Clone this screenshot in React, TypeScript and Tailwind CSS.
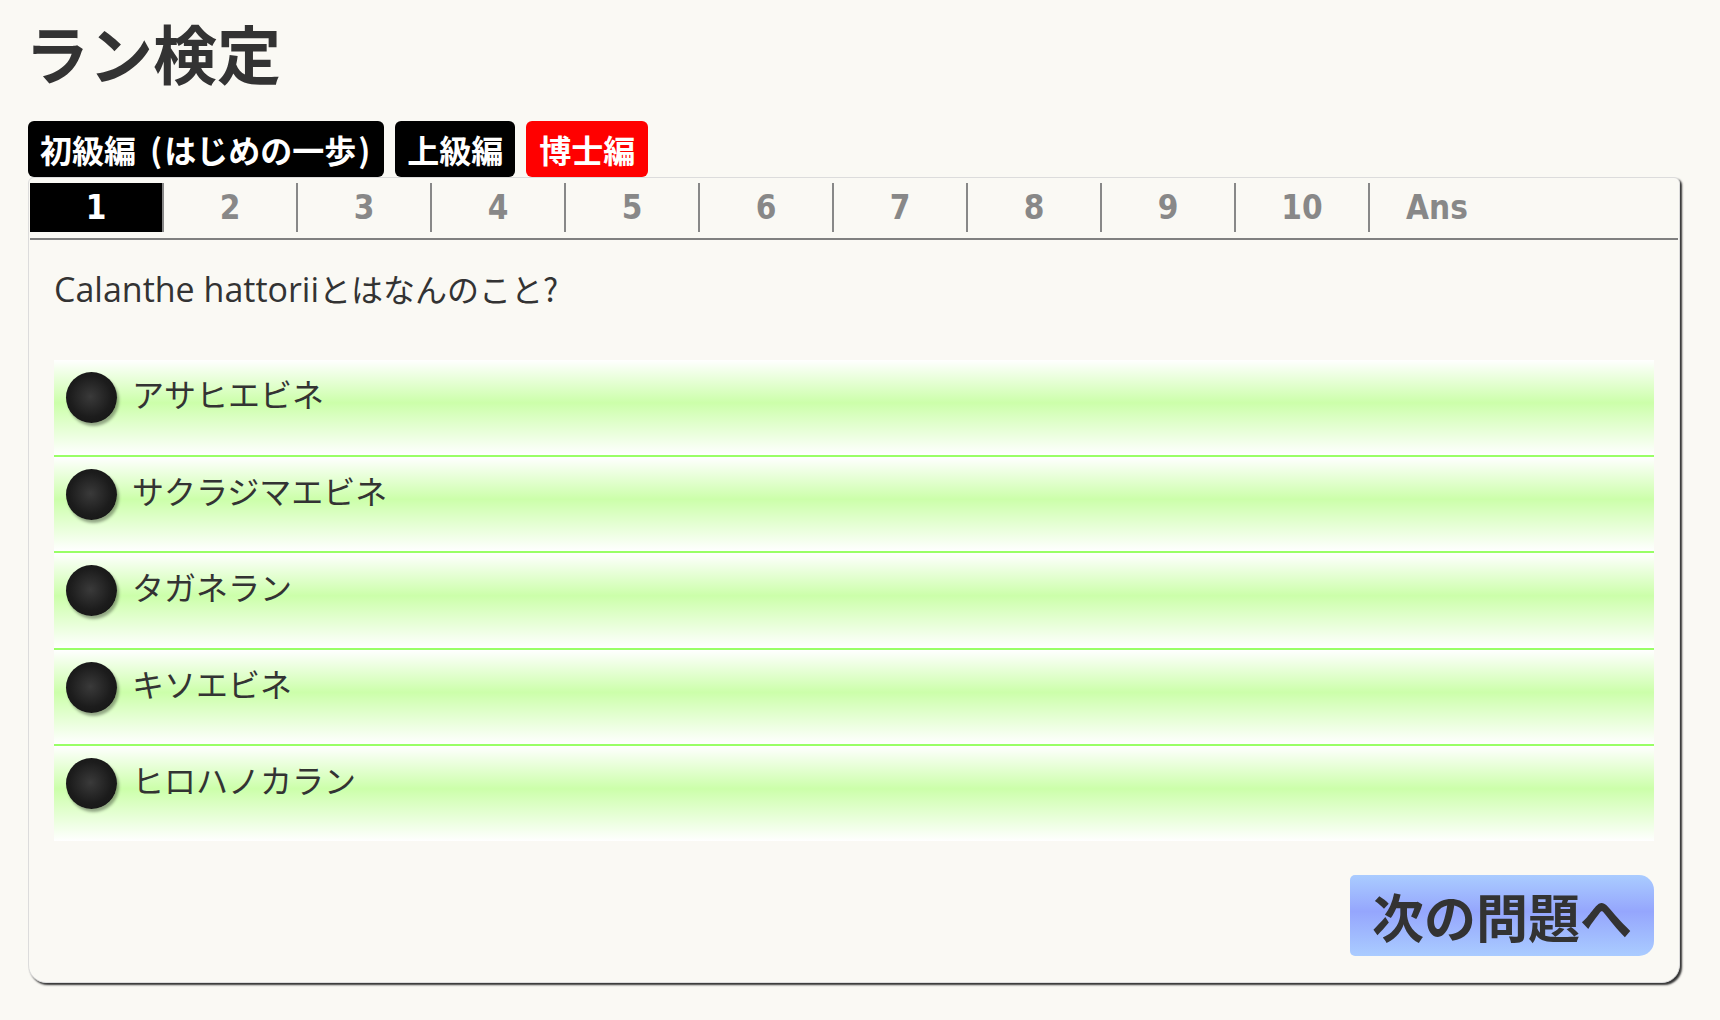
import React from "react";

const tabs = ["1", "2", "3", "4", "5", "6", "7", "8", "9", "10", "Ans"];
const options = ["アサヒエビネ", "サクラジマエビネ", "タガネラン", "キソエビネ", "ヒロハノカラン"];
const rowHeights = ["h-[97px]", "h-[96px]", "h-[97px]", "h-[96px]", "h-[95px]"];

export default function App() {
  return (
    <div
      className="min-h-[1020px] w-[1720px] bg-[#faf9f4] pl-[28px] pt-[19px] text-[#333]"
      style={{ fontFamily: '"Noto Sans CJK JP", sans-serif' }}
    >
      <h1 className="-ml-[3px] text-[64px] font-bold leading-none">ラン検定</h1>

      <div className="mt-[38px] flex gap-[11px]">
        <div className="flex h-[56px] items-center rounded-[6px] bg-black px-[12px] text-[32px] font-bold leading-none text-white">
          初級編<span className="ml-[14px] mr-[2px]">(</span>はじめの一歩<span className="ml-[2px] mr-[2px]">)</span>
        </div>
        <div className="flex h-[56px] items-center rounded-[6px] bg-black px-[12px] text-[32px] font-bold leading-none text-white">
          上級編
        </div>
        <div className="flex h-[56px] items-center rounded-[6px] bg-[#ff0000] px-[13px] text-[32px] font-bold leading-none text-white">
          博士編
        </div>
      </div>

      <div className="w-[1652px] rounded-t-[6px] rounded-b-[18px] border border-[#dcdcdc] bg-[#faf9f4] shadow-[2px_2px_2px_#333]">
        <div className="px-[1px] pt-[5px]">
          <div
            className="flex"
            style={{ fontFamily: '"DejaVu Sans Condensed", "DejaVu Sans", sans-serif', fontStretch: "condensed" }}
          >
            {tabs.map((t, i) => (
              <div
                key={t}
                className={
                  "flex h-[49px] w-[134px] items-center justify-center text-[33px] font-bold leading-none " +
                  (i < tabs.length - 1 ? "border-r-2 border-[#888] " : "") +
                  (i === 0 ? "bg-black text-white" : "text-[#888]")
                }
              >
                {t}
              </div>
            ))}
          </div>
          <div className="mt-[6px] h-[2px] bg-[#808080]" />
        </div>

        <div className="px-[25px] pb-[26px]">
          <p className="mt-[32px] text-[32px] leading-none">
            <span className="text-[34px]" style={{ fontFamily: '"Open Sans", sans-serif' }}>
              Calanthe hattorii
            </span>
            とはなんのこと?
          </p>

          <div className="mt-[54px]">
            {options.map((o, i) => (
              <div
                key={o}
                className={
                  "bg-[linear-gradient(to_bottom,#ffffff_0%,#ccffaa_45%,#ffffff_100%)] px-[12px] pt-[12px] " +
                  rowHeights[i] +
                  (i < options.length - 1 ? " border-b-2 border-[#99ff66]" : "")
                }
              >
                <div className="flex items-center">
                  <div className="h-[51px] w-[51px] shrink-0 rounded-full bg-[radial-gradient(circle_at_48%_48%,#3a3a3a_0%,#1c1c1c_55%,#111_100%)] shadow-[2px_3px_3px_rgba(0,0,0,0.35)]" />
                  <span className="ml-[15px] -mt-[10px] text-[32px] leading-none">{o}</span>
                </div>
              </div>
            ))}
          </div>

          <div className="mt-[34px] flex justify-end">
            <button className="flex h-[81px] w-[304px] items-center justify-center rounded-l-[5px] rounded-r-[15px] bg-[linear-gradient(to_bottom,#aaccff_0%,#95a6fd_45%,#aaccff_100%)] text-[52px] font-bold leading-none text-[#333]">
              次の問題へ
            </button>
          </div>
        </div>
      </div>
    </div>
  );
}
